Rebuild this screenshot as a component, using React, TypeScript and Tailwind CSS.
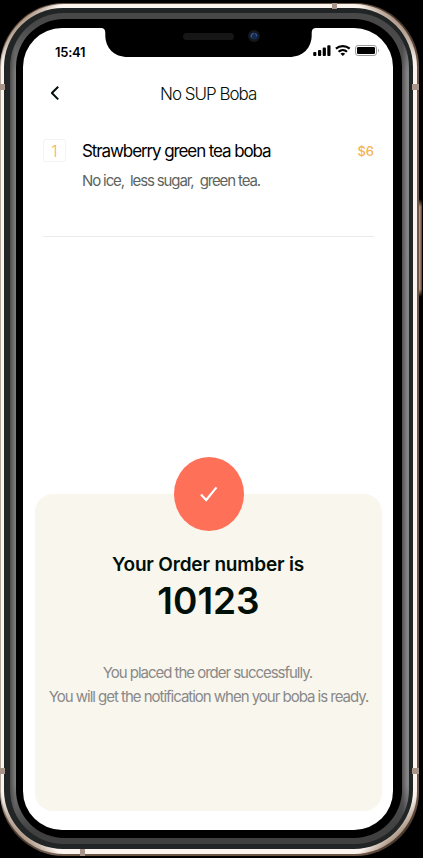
import React from "react";

function StatusIcons() {
  return (
    <svg width="68" height="14" viewBox="0 0 68 14" fill="none">
      <g fill="#000">
        <rect x="0.2" y="8" width="3.2" height="4" rx="0.9" />
        <rect x="5" y="6" width="3.200" height="6" rx="0.9" />
        <rect x="9.700" y="3.600" width="3.200" height="8.400" rx="0.9" />
        <rect x="14.300" y="1.200" width="3.200" height="10.800" rx="0.9" />
      </g>
      <g stroke="#000" strokeWidth="2.200">
        <path d="M22.900 4.700a10.600 10.600 0 0 1 13.800 0" />
        <path d="M25.600 7.800a6.200 6.200 0 0 1 8.400 0" />
      </g>
      <path d="M27.400 9.700a3.600 3.600 0 0 1 4.800 0L29.800 12.100Z" fill="#000" />
      <rect x="42.500" y="1.500" width="21" height="10" rx="2.600" stroke="#999" />
      <rect x="44" y="3" width="18" height="7" rx="1.300" fill="#000" />
      <path d="M65 4.800v3.600c1.200-.6 1.200-3 0-3.600Z" fill="#999" />
    </svg>
  );
}

function Notch() {
  return (
    <div className="absolute left-[78px] top-[-1px] h-[31px] w-[215px]">
      <svg className="absolute inset-0" width="215" height="31" viewBox="0 0 215 31">
        <path d="M0 0V1C3 1 4.3 2.5 4.3 6V8C4.3 21 13 30 27 30H188C202 30 210.700 21 210.700 8V6C210.700 2.500 212 1 215 1V0Z" fill="#000" />
        <rect x="82" y="6" width="51" height="7" rx="3.500" fill="#161616" />
        <circle cx="153" cy="9" r="6" fill="#14171b" />
        <circle cx="153" cy="9" r="3.500" fill="#15294b" />
        <path d="M150.700 10.500a2.500 2.500 0 0 1 2-4M154 6.500a2.500 2.500 0 0 1 1.500 3" fill="none" stroke="#2d5797" strokeWidth="1.300" />
      </svg>
    </div>
  );
}

function OrderScreen() {
  return (
    <div className="relative flex h-full w-full flex-col overflow-hidden rounded-[39px] bg-white">
      <Notch />
      <div className="flex h-[47px] items-start justify-between pl-[32px] pr-[12px] pt-[16px]">
        <span className="text-[13px] font-semibold leading-[16px] tracking-[-0.25px] text-black">15:41</span>
        <StatusIcons />
      </div>
      <header className="flex h-[36px] items-center pl-[27px]">
        <svg width="10" height="16" viewBox="0 0 10 16" fill="none">
          <path d="M8.200 1.700L1.900 8l6.300 6.400" stroke="#000f08" strokeWidth="2" strokeLinejoin="round" />
        </svg>
        <h1 className="ml-[100px] mt-px whitespace-nowrap text-[17px] font-light leading-[24px] tracking-[-1px] text-[#000f08]">No SUP Boba</h1>
      </header>
      <section className="ml-[20px] mt-[24px] flex h-[102px] w-[331px] items-start border-b border-[#ebebeb]">
        <div className="mt-[4px] flex h-[23px] w-[23px] items-center justify-center rounded-[3px] border border-[#f3f3f3] text-[16px] font-light leading-[20px] text-[#f8b34c]">1</div>
        <div className="ml-[16px] flex-1 whitespace-nowrap">
          <h2 className="mt-[4px] text-[17px] leading-[24px] tracking-[-1.1px] text-black">Strawberry green tea boba</h2>
          <p className="mt-[8px] text-[15px] leading-[20px] tracking-[-1.13px] text-[#5c655f]">No ice,&nbsp; less sugar,&nbsp; green tea.</p>
        </div>
        <span className="mt-[7px] text-[13px] font-medium leading-[18px] text-[#f5b350]">$6</span>
      </section>
      <section className="ml-[12px] mt-[257px] flex h-[317px] w-[347px] flex-col items-center rounded-[18px] bg-[#f9f6ee]">
        <div className="-mt-[37px] flex h-[74px] w-[70px] shrink-0 items-center justify-center rounded-[50%] bg-[#ff7058]">
          <svg width="20" height="18" viewBox="0 0 20 18" fill="none">
            <path d="M2 9.500L7.200 15 17.500 2.400" stroke="#fff" strokeWidth="2.200" />
          </svg>
        </div>
        <h2 className="mr-px mt-[21px] whitespace-nowrap text-[19px] font-semibold leading-[26px] tracking-[-0.18px] text-[#000f08]">Your Order number is</h2>
        <strong className="mt-px whitespace-nowrap text-[37px] font-semibold leading-[44px] text-[#000f08]">10123</strong>
        <p className="mt-[38px] whitespace-nowrap text-center text-[15px] leading-[24px] text-[#898989]">
          <span className="mr-[2px] block tracking-[-1.03px]">You placed the order successfully.</span>
          <span className="block tracking-[-1.02px]">You will get the notification when your boba is ready.</span>
        </p>
      </section>
    </div>
  );
}

export default function App() {
  return (
    <main className="relative h-[858px] w-[423px] overflow-hidden bg-black pt-[3px] font-['Inter','Liberation_Sans',sans-serif]">
      <div className="absolute left-[416px] top-[199px] h-[98px] w-[6px] rounded-[3px] bg-[linear-gradient(to_bottom,#000,transparent_8%,transparent_92%,#000),linear-gradient(to_right,#684f3e,#bb997e_60%,#54402f)]" />
      <div className="relative h-[853px] w-[419px] rounded-[64px] bg-[linear-gradient(135deg,#4a3a2e_28px,transparent_40px),linear-gradient(225deg,#4a3a2e_28px,transparent_40px),linear-gradient(45deg,#4a3a2e_28px,transparent_40px),linear-gradient(315deg,#4a3a2e_28px,transparent_40px),linear-gradient(to_right,#b5a79d_0,#b5a79d_20px,#6e5747_60px)] pb-[2px] pl-[1px] pr-[2px] pt-[1px]">
        <div className="h-full rounded-[63px] bg-[linear-gradient(135deg,#a89280_26px,transparent_42px),linear-gradient(225deg,#a89280_26px,transparent_42px),linear-gradient(45deg,#a89280_26px,transparent_42px),linear-gradient(315deg,#a89280_26px,transparent_42px)] bg-[#faf3ee] pb-[5px] pl-[3px] pr-[4px] pt-[4px]">
          <div className="h-full rounded-[59px] bg-[#222526] pb-[5px] pl-[6px] pr-[4px] pt-[5px]">
            <div className="h-full rounded-[54px] bg-[linear-gradient(to_bottom,#484848_12px,transparent_60px),linear-gradient(to_top,#404040_12px,transparent_60px),linear-gradient(to_right,#4c4c4c,#7b7b7b_5px,#5c5c5c_50%,#525252_calc(100%_-_7px),#858585_calc(100%_-_2px))] pb-[6px] pl-[6px] pr-[7px] pt-[6px]">
              <div className="h-full rounded-[48px] bg-black pb-[8px] pl-[7px] pr-[9px] pt-[9px]">
                <OrderScreen />
              </div>
            </div>
          </div>
        </div>
        <div className="absolute left-0 top-[81px] h-[6px] w-[5px] bg-[#a89488]" />
        <div className="absolute left-0 top-[765px] h-[6px] w-[5px] bg-[#a89488]" />
        <div className="absolute left-[412px] top-[81px] h-[6px] w-[7px] bg-[#a89488]" />
        <div className="absolute left-[412px] top-[765px] h-[6px] w-[7px] bg-[#a89488]" />
        <div className="absolute left-[332px] top-0 h-[6px] w-[5px] bg-[#a89488]" />
        <div className="absolute left-[80px] top-[846px] h-[7px] w-[5px] bg-[#a89488]" />
      </div>
    </main>
  );
}
